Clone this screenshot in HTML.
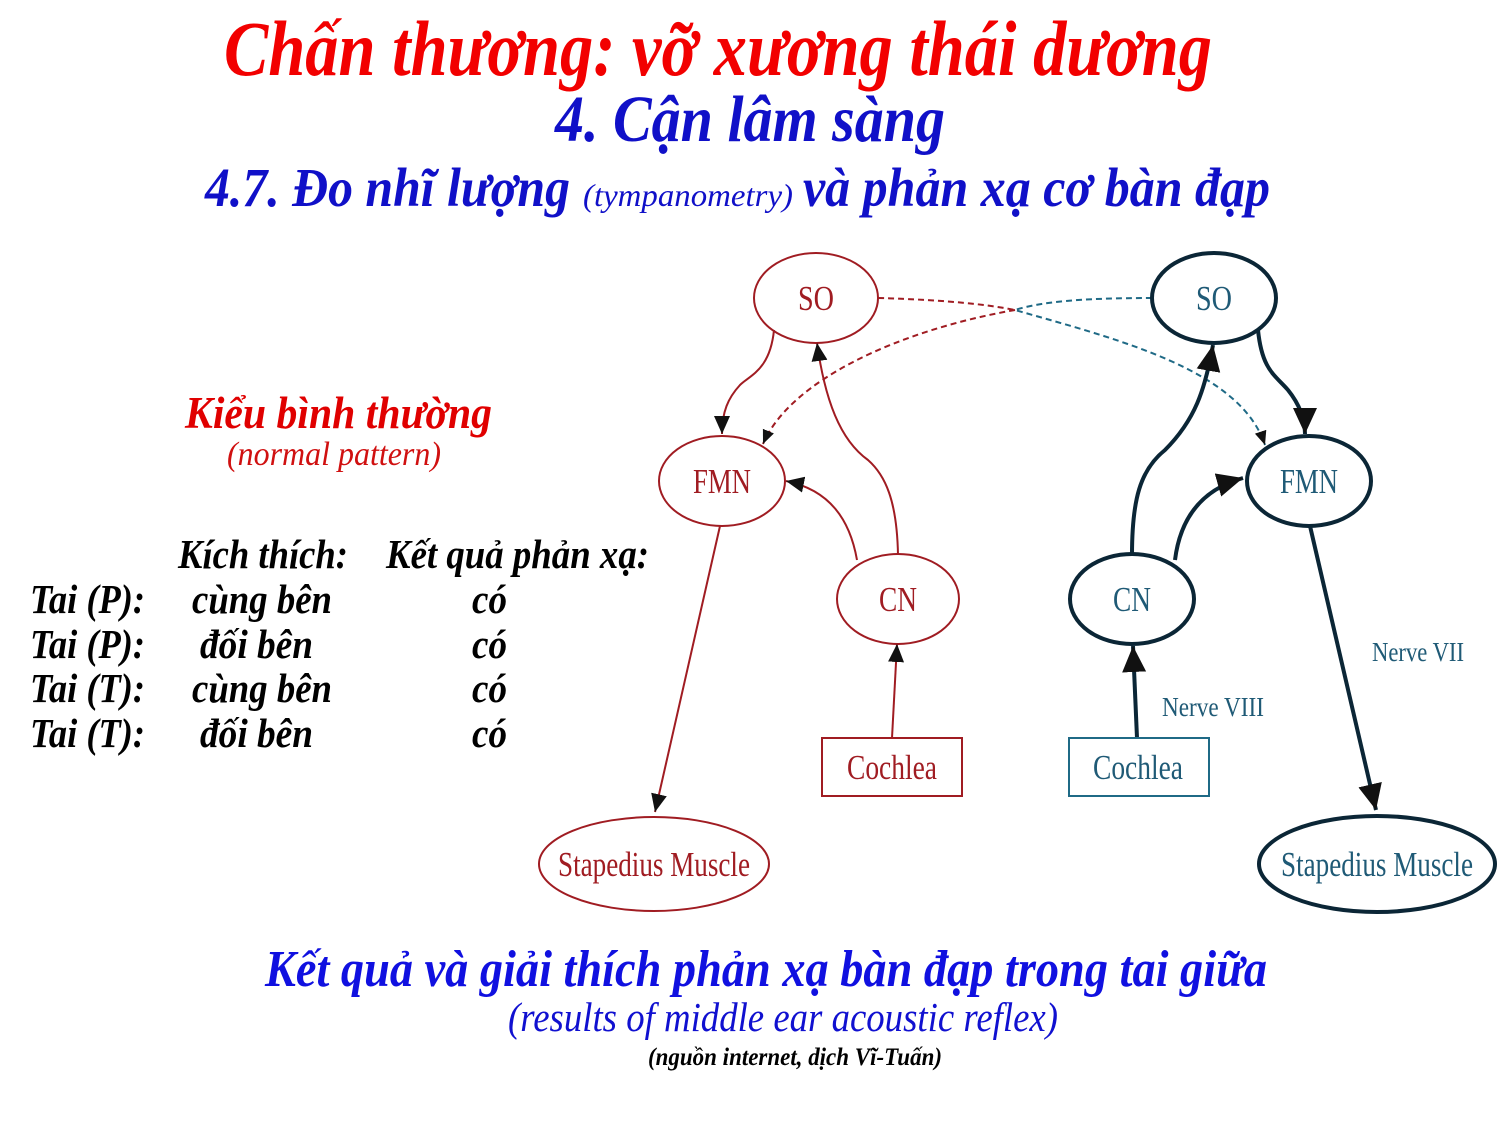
<!DOCTYPE html>
<html><head><meta charset="utf-8"><style>
html,body{margin:0;padding:0;background:#fff;}
svg{display:block;}
</style></head><body>
<svg width="1500" height="1125" viewBox="0 0 1500 1125" xmlns="http://www.w3.org/2000/svg">
<defs>
<marker id="ar" markerUnits="userSpaceOnUse" markerWidth="20" markerHeight="20" refX="18" refY="8" orient="auto"><path d="M0,0 L18,8 L0,16 z" fill="#111"/></marker>
<marker id="ab" markerUnits="userSpaceOnUse" markerWidth="30" markerHeight="30" refX="26" refY="12" orient="auto"><path d="M0,0 L26,12 L0,24 z" fill="#111"/></marker>
<marker id="ad" markerUnits="userSpaceOnUse" markerWidth="16" markerHeight="16" refX="14" refY="6" orient="auto"><path d="M0,0 L14,6 L0,12 z" fill="#111"/></marker>
</defs>
<g font-family="Liberation Serif, serif" font-style="italic" font-weight="bold">
<text x="224" y="75" font-size="78" fill="#f20000" textLength="988" lengthAdjust="spacingAndGlyphs">Chấn thương: vỡ xương thái dương</text>
<text x="555" y="141" font-size="66" fill="#1010c8" textLength="390" lengthAdjust="spacingAndGlyphs">4. Cận lâm sàng</text>
<text x="205" y="206" font-size="55" fill="#1010c8">
<tspan textLength="365" lengthAdjust="spacingAndGlyphs">4.7. Đo nhĩ lượng</tspan><tspan x="583" font-size="32" font-weight="normal" textLength="210" lengthAdjust="spacingAndGlyphs">(tympanometry)</tspan><tspan x="803" textLength="467" lengthAdjust="spacingAndGlyphs">và phản xạ cơ bàn đạp</tspan></text>
<text x="185" y="428" font-size="45" fill="#e00000" textLength="307" lengthAdjust="spacingAndGlyphs">Kiểu bình thường</text>
<text x="227" y="465" font-size="34" font-weight="normal" fill="#d01010" textLength="214" lengthAdjust="spacingAndGlyphs">(normal pattern)</text>
<g fill="#000" font-size="41">
<text x="178" y="568" textLength="170" lengthAdjust="spacingAndGlyphs">Kích thích:</text>
<text x="386" y="568" textLength="263" lengthAdjust="spacingAndGlyphs">Kết quả phản xạ:</text>
<text x="30" y="613" textLength="115" lengthAdjust="spacingAndGlyphs">Tai (P):</text>
<text x="30" y="658" textLength="115" lengthAdjust="spacingAndGlyphs">Tai (P):</text>
<text x="30" y="702" textLength="115" lengthAdjust="spacingAndGlyphs">Tai (T):</text>
<text x="30" y="747" textLength="115" lengthAdjust="spacingAndGlyphs">Tai (T):</text>
<text x="192" y="613" textLength="140" lengthAdjust="spacingAndGlyphs">cùng bên</text>
<text x="200" y="658" textLength="113" lengthAdjust="spacingAndGlyphs">đối bên</text>
<text x="192" y="702" textLength="140" lengthAdjust="spacingAndGlyphs">cùng bên</text>
<text x="200" y="747" textLength="113" lengthAdjust="spacingAndGlyphs">đối bên</text>
<text x="472" y="613" textLength="35" lengthAdjust="spacingAndGlyphs">có</text>
<text x="472" y="658" textLength="35" lengthAdjust="spacingAndGlyphs">có</text>
<text x="472" y="702" textLength="35" lengthAdjust="spacingAndGlyphs">có</text>
<text x="472" y="747" textLength="35" lengthAdjust="spacingAndGlyphs">có</text>
</g>
<text x="265" y="986" font-size="52" fill="#1010e0" textLength="1002" lengthAdjust="spacingAndGlyphs">Kết quả và giải thích phản xạ bàn đạp trong tai giữa</text>
<text x="508" y="1031" font-size="41" font-weight="normal" fill="#1010d0" textLength="550" lengthAdjust="spacingAndGlyphs">(results of middle ear acoustic reflex)</text>
<text x="648" y="1065" font-size="25" fill="#000" textLength="294" lengthAdjust="spacingAndGlyphs">(nguồn internet, dịch Vĩ-Tuấn)</text>
</g>

<g fill="none" stroke="#a01c22" stroke-width="2">
<ellipse cx="816" cy="298" rx="62" ry="45"/>
<ellipse cx="722" cy="481" rx="63" ry="45"/>
<ellipse cx="898" cy="599" rx="61" ry="45"/>
<ellipse cx="654" cy="864" rx="115" ry="47"/>
<rect x="822" y="738" width="140" height="58"/>
<path d="M774,330 C770,370 750,375 740,385 C728,398 722,412 722,434" marker-end="url(#ar)"/>
<path d="M857,560 C850,520 830,490 786,481" marker-end="url(#ar)"/>
<path d="M898,555 C897,500 885,475 868,460 C840,440 825,400 817,343" marker-end="url(#ar)"/>
<path d="M892,738 L897,644" marker-end="url(#ar)"/>
<path d="M720,526 L655,812" marker-end="url(#ar)"/>
<path d="M878,298 C950,300 990,305 1015,310" stroke-dasharray="6,4"/>
<path d="M1015,310 C900,330 790,380 763,444" stroke-dasharray="6,4" marker-end="url(#ad)"/>
</g>
<path d="M1152,298 C1080,298 1040,302 1015,310 C1120,340 1240,370 1265,445" fill="none" stroke="#1f6a86" stroke-width="2" stroke-dasharray="6,4" marker-end="url(#ad)"/>
<g fill="none" stroke="#0b2636" stroke-width="4">
<ellipse cx="1214" cy="298" rx="62" ry="45"/>
<ellipse cx="1309" cy="481" rx="62" ry="45"/>
<ellipse cx="1132" cy="599" rx="62" ry="45"/>
<ellipse cx="1377" cy="864" rx="118" ry="48"/>
<path d="M1132,555 C1132,500 1140,470 1165,450 C1195,420 1205,390 1213,345" marker-end="url(#ab)"/>
<path d="M1175,560 C1180,520 1200,490 1243,478" marker-end="url(#ab)"/>
<path d="M1258,330 C1262,370 1275,375 1288,390 C1300,405 1305,420 1305,434" marker-end="url(#ab)"/>
<path d="M1137,738 L1133,646" marker-end="url(#ab)"/>
<path d="M1310,526 L1376,810" marker-end="url(#ab)"/>
</g>
<rect x="1069" y="738" width="140" height="58" fill="none" stroke="#1f6a86" stroke-width="2"/>
<g font-family="Liberation Serif, serif" font-size="35">
<text x="816" y="310" text-anchor="middle" fill="#a01c22" textLength="36" lengthAdjust="spacingAndGlyphs">SO</text>
<text x="722" y="493" text-anchor="middle" fill="#a01c22" textLength="58" lengthAdjust="spacingAndGlyphs">FMN</text>
<text x="898" y="611" text-anchor="middle" fill="#a01c22" textLength="38" lengthAdjust="spacingAndGlyphs">CN</text>
<text x="892" y="779" text-anchor="middle" fill="#a01c22" textLength="90" lengthAdjust="spacingAndGlyphs">Cochlea</text>
<text x="654" y="876" text-anchor="middle" fill="#a01c22" textLength="192" lengthAdjust="spacingAndGlyphs">Stapedius Muscle</text>
<text x="1214" y="310" text-anchor="middle" fill="#1f5a76" textLength="36" lengthAdjust="spacingAndGlyphs">SO</text>
<text x="1309" y="493" text-anchor="middle" fill="#1f5a76" textLength="58" lengthAdjust="spacingAndGlyphs">FMN</text>
<text x="1132" y="611" text-anchor="middle" fill="#1f5a76" textLength="38" lengthAdjust="spacingAndGlyphs">CN</text>
<text x="1138" y="779" text-anchor="middle" fill="#1f5a76" textLength="90" lengthAdjust="spacingAndGlyphs">Cochlea</text>
<text x="1377" y="876" text-anchor="middle" fill="#1f5a76" textLength="192" lengthAdjust="spacingAndGlyphs">Stapedius Muscle</text>
<text x="1162" y="716" font-size="27" fill="#1f5a76" textLength="102" lengthAdjust="spacingAndGlyphs">Nerve VIII</text>
<text x="1372" y="661" font-size="27" fill="#1f5a76" textLength="92" lengthAdjust="spacingAndGlyphs">Nerve VII</text>
</g>
</svg>
</body></html>
